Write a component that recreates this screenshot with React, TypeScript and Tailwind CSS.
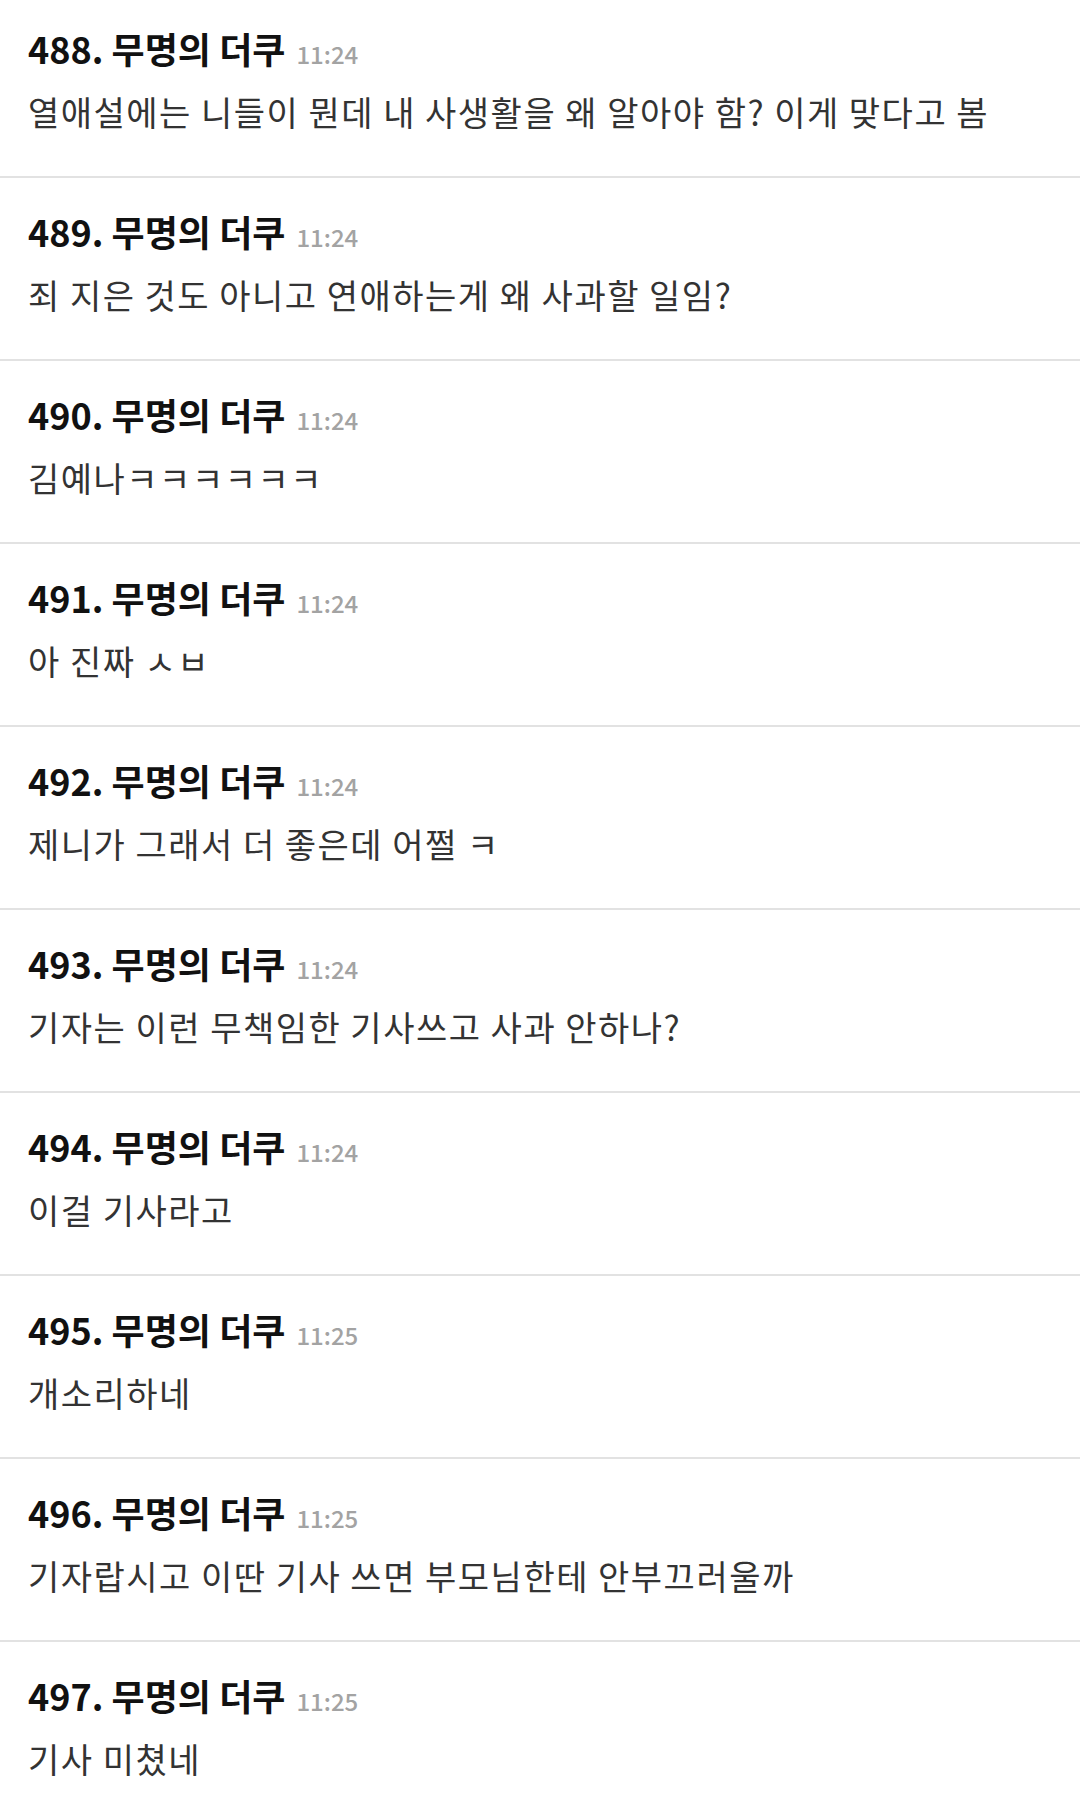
import React from 'react'

const comments = [
    { no: 488, time: '11:24', text: '열애설에는 니들이 뭔데 내 사생활을 왜 알아야 함? 이게 맞다고 봄' },
    { no: 489, time: '11:24', text: '죄 지은 것도 아니고 연애하는게 왜 사과할 일임?' },
    { no: 490, time: '11:24', text: '김예나ㅋㅋㅋㅋㅋㅋ' },
    { no: 491, time: '11:24', text: '아 진짜 ㅅㅂ' },
    { no: 492, time: '11:24', text: '제니가 그래서 더 좋은데 어쩔 ㅋ' },
    { no: 493, time: '11:24', text: '기자는 이런 무책임한 기사쓰고 사과 안하나?' },
    { no: 494, time: '11:24', text: '이걸 기사라고' },
    { no: 495, time: '11:25', text: '개소리하네' },
    { no: 496, time: '11:25', text: '기자랍시고 이딴 기사 쓰면 부모님한테 안부끄러울까' },
    { no: 497, time: '11:25', text: '기사 미쳤네' },
]

const App = () => {
    return (
        <div
            className='w-[1080px] h-[1814px] overflow-hidden bg-white'
            style={{ fontFamily: '"Noto Sans CJK KR", "Noto Sans", sans-serif' }}
        >
            <div className='-mt-[5px]'>
                {comments.map((item) => (
                    <div key={item.no} className='px-[28px] pt-[31px] pb-[42px] border-b-2 border-[#e2e2e2]'>
                        <div className='flex items-baseline h-[44px] leading-[44px]'>
                            <span className='text-[36px] font-bold text-[#111]'>
                                {item.no}. 무명의 더쿠
                            </span>
                            <span className='ml-[11px] text-[24px] font-medium text-[#a3a3a3]'>{item.time}</span>
                        </div>
                        <div className='mt-[20px] h-[44px] leading-[44px] text-[34px] tracking-[1.5px] text-[#333] whitespace-nowrap'>
                            {item.text}
                        </div>
                    </div>
                ))}
            </div>
        </div>
    )
}

export default App
